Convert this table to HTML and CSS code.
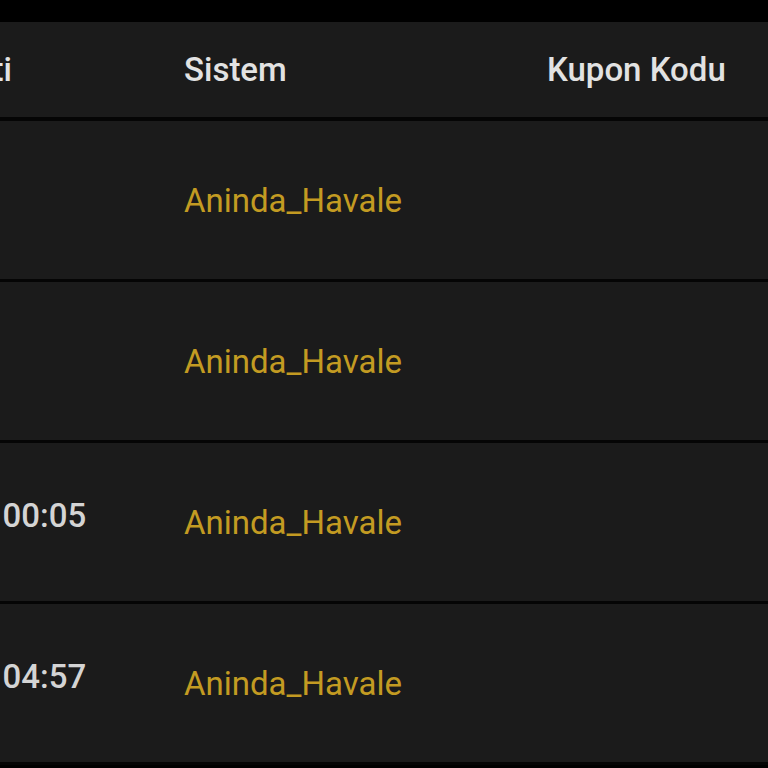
FILE: index.html
```html
<!DOCTYPE html>
<html lang="tr">
<head>
    <meta charset="UTF-8">
    <meta name="viewport" content="width=device-width, initial-scale=1.0">
    <title>Yatırım Geçmişi</title>
    <link rel="stylesheet" href="styles.css">
</head>
<body>

<div class="topBar"></div>

<div class="history">
    <div class="row headRow">
        <div class="cell dateCell">Tarih Saati</div>
        <div class="cell">Sistem</div>
        <div class="cell">Kupon Kodu</div>
    </div>

    <div class="row">
        <div class="cell dateCell"></div>
        <div class="cell system">Aninda_Havale</div>
        <div class="cell"></div>
    </div>

    <div class="row">
        <div class="cell dateCell"></div>
        <div class="cell system">Aninda_Havale</div>
        <div class="cell"></div>
    </div>

    <div class="row">
        <div class="cell dateCell"><span class="time">12.03.2024 00:05</span></div>
        <div class="cell system">Aninda_Havale</div>
        <div class="cell"></div>
    </div>

    <div class="row">
        <div class="cell dateCell"><span class="time">11.03.2024 04:57</span></div>
        <div class="cell system">Aninda_Havale</div>
        <div class="cell"></div>
    </div>
</div>

</body>
</html>
```

FILE: styles.css
```css
body {
    margin: 0;
    padding: 0;
    background-color: #000;
    font-family: Roboto, "Liberation Sans", Arial, sans-serif;
    overflow: hidden;
    height: 768px;
}

.topBar {
    height: 22px;
    background-color: #000;
}

/* Table - first column starts off screen */
.history {
    margin-left: -190px;
    width: 1100px;
}

.row {
    display: grid;
    grid-template-columns: 374px 363px 1fr;
    align-items: center;
    height: 158px;
    background-color: #1b1b1b;
    border-bottom: 3px solid #050505;
}

.headRow {
    height: 95px;
    border-bottom-width: 4px;
    color: #e2e2e2;
    font-weight: 500;
}

.cell {
    font-size: 33px;
    white-space: nowrap;
}

.dateCell {
    padding-left: 16px;
}

.headRow .dateCell {
    padding-left: 0;
    padding-right: 172px;
    text-align: right;
}

.system {
    color: #c39b22;
}

.time {
    position: relative;
    top: -7px;
    color: #d4d4d4;
    font-weight: 500;
}
```
